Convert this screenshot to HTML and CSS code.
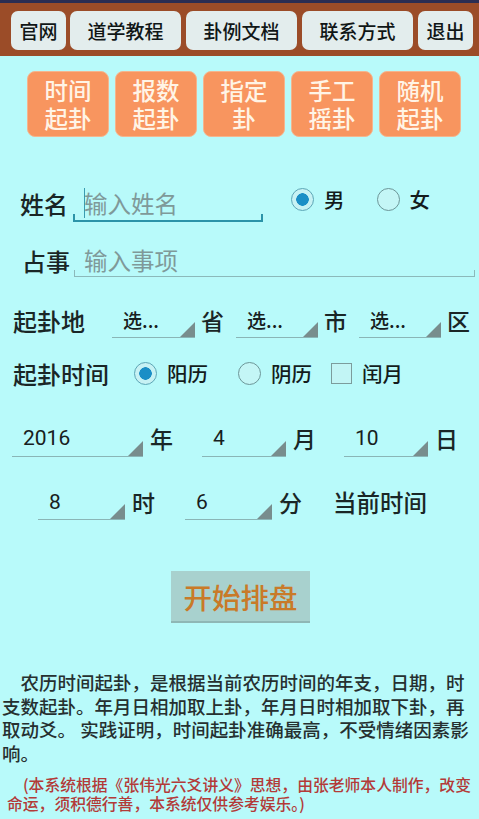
FILE: index.html
```html
<!DOCTYPE html>
<html lang="zh-CN">
<head>
<meta charset="utf-8">
<title>时间起卦</title>
<link rel="stylesheet" href="styles.css">
</head>
<body>
<div class="status"></div>
<div class="topbar">
  <div class="tb w-s">官网</div>
  <div class="tb w-l">道学教程</div>
  <div class="tb w-l">卦例文档</div>
  <div class="tb w-l">联系方式</div>
  <div class="tb w-s">退出</div>
</div>
<div class="modes">
  <div class="mode"><span>时间</span><span>起卦</span></div>
  <div class="mode"><span>报数</span><span>起卦</span></div>
  <div class="mode"><span>指定</span><span>卦</span></div>
  <div class="mode"><span>手工</span><span>摇卦</span></div>
  <div class="mode"><span>随机</span><span>起卦</span></div>
</div>

<div class="row r-name">
  <div class="lbl l-name">姓名</div>
  <div class="edit e-name">
    <span class="caret"></span><span class="ph">输入姓名</span>
    <div class="eline focus"></div>
  </div>
  <div class="radios r-sex">
    <span class="radio on"></span><span class="rtext">男</span>
    <span class="radio gap-r"></span><span class="rtext">女</span>
  </div>
</div>

<div class="row r-matter">
  <div class="lbl l-matter">占事</div>
  <div class="edit e-matter">
    <span class="ph">输入事项</span>
    <div class="eline"></div>
  </div>
</div>

<div class="row r-place">
  <div class="lbl l-place">起卦地</div>
  <div class="spin s-p1"><span class="sv cjk">选...</span></div>
  <div class="unit u-p">省</div>
  <div class="spin s-p2"><span class="sv cjk">选...</span></div>
  <div class="unit u-p">市</div>
  <div class="spin s-p3"><span class="sv cjk">选...</span></div>
  <div class="unit u-p">区</div>
</div>

<div class="row r-time">
  <div class="lbl l-place">起卦时间</div>
  <span class="radio on t-r1"></span><span class="rtext">阳历</span>
  <span class="radio t-r2"></span><span class="rtext">阴历</span>
  <span class="check"></span><span class="rtext">闰月</span>
</div>

<div class="row r-date">
  <div class="spin s-y"><span class="sv">2016</span></div>
  <div class="unit u-d">年</div>
  <div class="spin s-m"><span class="sv">4</span></div>
  <div class="unit u-d">月</div>
  <div class="spin s-dd"><span class="sv">10</span></div>
  <div class="unit u-d">日</div>
</div>

<div class="row r-hm">
  <div class="spin s-h"><span class="sv">8</span></div>
  <div class="unit u-d">时</div>
  <div class="spin s-mi"><span class="sv">6</span></div>
  <div class="unit u-d">分</div>
  <div class="now">当前时间</div>
</div>

<div class="start-wrap">
  <div class="start">开始排盘</div>
</div>

<p class="desc">农历时间起卦，是根据当前农历时间的年支，日期，时支数起卦。年月日相加取上卦，年月日时相加取下卦，再取动爻。 实践证明，时间起卦准确最高，不受情绪因素影响。</p>
<p class="note">(本系统根据《张伟光六爻讲义》思想，由张老师本人制作，改变命运，须积德行善，本系统仅供参考娱乐。)</p>
</body>
</html>
```
FILE: styles.css
```css
html, body {
  margin: 0;
  padding: 0;
}
body {
  width: 479px;
  height: 819px;
  overflow: hidden;
  background: #b8fafa;
  font-family: "Noto Sans CJK SC", "Noto Sans", sans-serif;
  font-weight: 500;
  color: #1a2424;
}
.status {
  height: 3px;
  background: #2b2d52;
}
.topbar {
  height: 53px;
  background: #9b4c28;
  display: flex;
  align-items: flex-start;
  padding: 8px 0 0 11px;
  box-sizing: border-box;
  gap: 5px;
}
.tb {
  height: 39px;
  background: #e3eded;
  border-radius: 7px;
  display: flex;
  align-items: center;
  justify-content: center;
  font-size: 19px;
  color: #101616;
}
.w-s { width: 55px; }
.w-l { width: 111px; }
.w-s:first-child { margin-right: -1px; }

.modes {
  display: flex;
  gap: 6px;
  padding: 15px 0 0 27px;
}
.mode {
  width: 82px;
  height: 66px;
  box-sizing: border-box;
  background: #f8955f;
  border: 1.5px solid #f4b58e;
  border-radius: 8px;
  color: #fff4e6;
  font-size: 23.5px;
  text-align: center;
  display: flex;
  flex-direction: column;
  align-items: center;
  justify-content: center;
}
.mode span {
  display: block;
  height: 28px;
  line-height: 28px;
}

.row {
  display: flex;
  align-items: center;
  height: 48px;
}
.r-name { margin-top: 42px; }
.r-matter { margin-top: 9px; }
.r-place { margin-top: 12px; }
.r-time { margin-top: 5px; }
.r-date { margin-top: 17px; }
.r-hm { margin-top: 16px; }

.lbl {
  font-size: 24px;
  color: #1a2626;
  white-space: nowrap;
}
.l-name { margin-left: 20px; }
.l-matter { margin-left: 22px; }
.l-place { margin-left: 13px; }

.edit {
  position: relative;
  display: flex;
  align-items: center;
  box-sizing: border-box;
  padding-left: 11px;
}
.e-name {
  width: 190px;
  height: 38px;
  margin-left: 5px;
}
.e-matter {
  width: 401px;
  height: 34px;
  margin-left: 4px;
  padding-left: 10px;
}
.ph {
  font-size: 23.5px;
  font-weight: 400;
  color: #7f9999;
}
.caret {
  display: inline-block;
  width: 1px;
  height: 30px;
  background: #3a9bb0;
  margin-right: -1px;
}
.eline {
  position: absolute;
  left: 0;
  right: 0;
  bottom: 0;
  height: 6px;
  border: 1.5px solid #8cb9ba;
  border-top: none;
}
.eline.focus {
  border-color: #2b93a8;
  border-width: 2px;
}

.radios {
  display: flex;
  align-items: center;
  margin-bottom: 8px;
}
.r-sex { margin-left: 28px; }
.radio {
  width: 23px;
  height: 23px;
  box-sizing: border-box;
  border-radius: 50%;
  border: 1.5px solid #6c9698;
  background: #c4f6f6;
  display: inline-block;
  position: relative;
  flex: none;
}
.radio.on {
  border-color: #5da6b6;
  background: radial-gradient(circle, #1b8fc6 0 6px, #c7f2f4 6.5px);
}
.rtext {
  font-size: 20.5px;
  color: #141c1c;
  margin-left: 10px;
}
.gap-r { margin-left: 32px; }
.r-time .t-r1 { margin-left: 25px; }
.r-time .t-r2 { margin-left: 30px; }
.check {
  width: 21px;
  height: 21px;
  box-sizing: border-box;
  border: 1.5px solid #7c9c9c;
  background: #c2f5f5;
  margin-left: 19px;
  flex: none;
}

.spin {
  position: relative;
  box-sizing: border-box;
  height: 36px;
  border-bottom: 1.5px solid #8ab5b6;
  display: flex;
  align-items: center;
  padding-left: 11px;
  font-family: Roboto, "Noto Sans", sans-serif;
  font-weight: 400;
  font-size: 21px;
  color: #172020;
}
.spin::after {
  content: "";
  position: absolute;
  right: 0;
  bottom: 0;
  width: 15px;
  height: 15px;
  background: #788d8d;
  clip-path: polygon(100% 0, 100% 100%, 0 100%);
}
.sv.cjk {
  font-family: "Noto Sans CJK SC", sans-serif;
  font-weight: 500;
  font-size: 19px;
}
.s-p1 { width: 83px; margin-left: 27px; }
.s-p2 { width: 82px; margin-left: 12px; }
.s-p3 { width: 82px; margin-left: 12px; }
.unit {
  font-size: 23px;
  color: #1a2626;
}
.u-p { margin-left: 6px; }
.u-d { margin-left: 7px; }

.r-date .spin { height: 38px; padding-left: 11px; }
.s-y { width: 131px; margin-left: 12px; }
.s-m { width: 84px; margin-left: 29px; }
.s-dd { width: 84px; margin-left: 28px; }
.s-h { width: 87px; margin-left: 38px; }
.s-mi { width: 87px; margin-left: 30px; }
.r-hm .spin { padding-left: 11px; }
.now {
  font-size: 23.5px;
  color: #1a2626;
  margin-left: 31px;
}

.start-wrap {
  display: flex;
  margin-top: 45px;
  padding-left: 171px;
}
.start {
  width: 139px;
  height: 52px;
  box-sizing: border-box;
  background: #a8d1ce;
  border-bottom: 2px solid #8fb7b5;
  color: #c97a28;
  font-size: 28.5px;
  display: flex;
  align-items: center;
  justify-content: center;
}

.desc {
  margin: 48px 0 0 0;
  padding: 0 2px;
  font-size: 18.5px;
  line-height: 23.5px;
  text-indent: 18.5px;
  color: #263030;
}
.note {
  margin: 10px 0 0 0;
  padding: 0 0 0 7px;
  font-size: 15.8px;
  line-height: 19px;
  text-indent: 16px;
  color: #b33a38;
}
```
